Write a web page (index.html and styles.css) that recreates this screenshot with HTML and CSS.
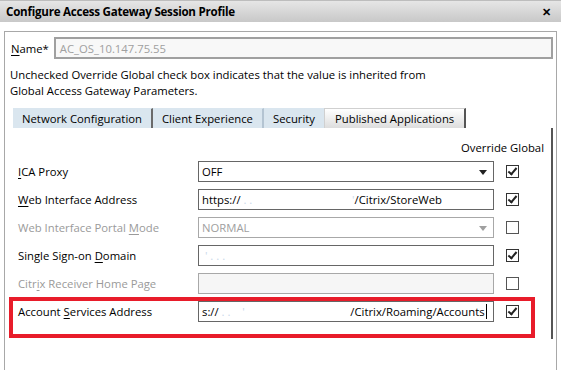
FILE: index.html
```html
<!DOCTYPE html>
<html>
<head>
    <title>Configure Access Gateway Session Profile</title>
    <link rel="stylesheet" href="styles.css">
</head>
<body>
    <div class="titlebar">
        <span class="title">Configure Access Gateway Session Profile</span>
        <span class="close">&#x2715;</span>
    </div>

    <div class="frame">
        <div class="name-row">
            <label><u>N</u>ame*</label>
            <div class="field readonly">AC_OS_10.147.75.55</div>
        </div>

        <p class="hint">Unchecked Override Global check box indicates that the value is inherited from<br>Global Access Gateway Parameters.</p>

        <div class="tabs">
            <div class="tab">Network Configuration</div>
            <div class="tab">Client Experience</div>
            <div class="tab">Security</div>
            <div class="tab active">Published Applications</div>
        </div>

        <div class="panel">
            <div class="override">Override Global</div>

            <div class="rows">
                <div class="row">
                    <label><u>I</u>CA Proxy</label>
                    <div class="field select">OFF<span class="arrow"></span></div>
                    <span class="check on"></span>
                </div>
                <div class="row">
                    <label><u>W</u>eb Interface Address</label>
                    <div class="field">https://<span class="blur">&nbsp;.&nbsp;.&nbsp;&nbsp;&nbsp;&nbsp;&nbsp;&nbsp;&nbsp;&nbsp;&nbsp;&nbsp;&nbsp;&nbsp;&nbsp;&nbsp;&nbsp;&nbsp;&nbsp;&nbsp;&nbsp;&nbsp;&nbsp;&nbsp;&nbsp;&nbsp;&nbsp;&nbsp;&nbsp;&nbsp;&nbsp;&nbsp;&nbsp;&nbsp;&nbsp;&nbsp;'</span>/Citrix/StoreWeb</div>
                    <span class="check on"></span>
                </div>
                <div class="row disabled">
                    <label>Web Interface Portal <u>M</u>ode</label>
                    <div class="field select">NORMAL<span class="arrow"></span></div>
                    <span class="check"></span>
                </div>
                <div class="row">
                    <label>Single Sign-on <u>D</u>omain</label>
                    <div class="field"><span class="blur">&nbsp;'&nbsp;.&nbsp;.&nbsp;.</span></div>
                    <span class="check on"></span>
                </div>
                <div class="row disabled">
                    <label>Citr<u>i</u>x Receiver Home Page</label>
                    <div class="field"></div>
                    <span class="check"></span>
                </div>
                <div class="row marked">
                    <label>Account <u>S</u>ervices Address</label>
                    <div class="field">s://<span class="blur">&nbsp;.&nbsp;.&nbsp;&nbsp;&nbsp;&nbsp;'&nbsp;&nbsp;&nbsp;&nbsp;&nbsp;&nbsp;&nbsp;&nbsp;&nbsp;&nbsp;&nbsp;&nbsp;&nbsp;&nbsp;&nbsp;&nbsp;&nbsp;&nbsp;&nbsp;&nbsp;&nbsp;&nbsp;&nbsp;&nbsp;&nbsp;&nbsp;&nbsp;&nbsp;&nbsp;&nbsp;&nbsp;&nbsp;&nbsp;&nbsp;&nbsp;&nbsp;</span>/Citrix/Roaming/Accounts<span class="caret"></span></div>
                    <span class="check on"></span>
                </div>
            </div>
        </div>
    </div>
</body>
</html>
```

FILE: styles.css
```css
* {
    margin: 0;
    padding: 0;
    box-sizing: border-box;
}

body {
    background: #ffffff;
    color: #000000;
    font-family: 'Open Sans', 'Noto Sans', sans-serif;
    font-size: 11.3px;
    height: 370px;
    overflow: hidden;
}

u {
    text-decoration: underline;
    text-underline-offset: 2px;
}

.titlebar {
    height: 22px;
    display: flex;
    align-items: center;
    justify-content: space-between;
    padding: 0 10px 0 6px;
    background: linear-gradient(#e6e6e6, #c8c8c8);
    border-top: 1px solid #bdbdbd;
}

.title {
    font-weight: 700;
    font-size: 11.6px;
    letter-spacing: -0.25px;
}

.close {
    font-size: 11px;
    font-weight: 700;
}

.frame {
    margin: 9px 4px 0 4px;
    height: 339px;
    border: 1px solid #a8a8a8;
    border-bottom: none;
}

.name-row {
    display: flex;
    align-items: center;
    gap: 5px;
    padding: 5px 3px 0 6px;
}

.name-row .field {
    flex: 1;
    height: 22px;
}

.field {
    height: 21px;
    border: 1px solid #666666;
    background: #ffffff;
    display: flex;
    align-items: center;
    padding: 0 3px;
    white-space: nowrap;
    overflow: hidden;
    position: relative;
}

.field.readonly {
    background: #f8f8f8;
    border: 2px solid #a0a0a0;
    color: #a0a0a0;
    padding: 0 4px;
}

.blur {
    color: #c9d7ea;
}

.hint {
    padding: 8px 0 0 5px;
    line-height: 16px;
}

.tabs {
    display: flex;
    margin: 9px 0 0 8px;
    height: 20px;
}

.tab {
    background: #dae6ef;
    padding: 0 9px;
    display: flex;
    align-items: center;
    border-right: 2px solid #6a6a6a;
    border-top: 1px solid #dae6ef;
}

.tab:nth-child(2) {
    border-right: 2px solid #b4c4d2;
}

.tab:nth-child(3) {
    border-right: none;
}

.tab.active {
    background: linear-gradient(#ffffff, #dddddd);
    border-top: 1px solid #d0d0d0;
    border-left: 1px solid #d0d0d0;
    border-right: 2px solid #555555;
    padding: 0 10px;
}

.panel {
    margin-right: 3px;
    height: 211px;
    border-right: 2px solid #555555;
    padding-top: 11px;
}

.override {
    text-align: right;
    padding-right: 7px;
    line-height: 18px;
}

.rows {
    display: flex;
    flex-direction: column;
    gap: 7px;
    padding: 4px 0 0 13px;
}

.row {
    display: grid;
    grid-template-columns: 168px 296px 13px;
    column-gap: 12px;
    align-items: center;
    height: 21px;
    position: relative;
}

.row.disabled label {
    color: #9a9a9a;
}

.row.disabled .field {
    border-color: #a8a8a8;
    color: #a0a0a0;
}

.row.disabled .field:not(.select) {
    background: #f6f6f6;
}

.select .arrow {
    position: absolute;
    right: 6px;
    top: 8px;
    border-left: 4px solid transparent;
    border-right: 4px solid transparent;
    border-top: 5px solid #222222;
}

.row.disabled .select .arrow {
    border-top-color: #a0a0a0;
}

.check {
    width: 13px;
    height: 13px;
    border: 1px solid #333333;
    background: #ffffff;
    position: relative;
}

.row.disabled .check {
    border-color: #555555;
}

.check.on::after {
    content: "";
    position: absolute;
    left: 3px;
    top: 0px;
    width: 3px;
    height: 7px;
    border-right: 2px solid #222222;
    border-bottom: 2px solid #222222;
    transform: rotate(40deg);
}

.caret {
    display: inline-block;
    width: 1px;
    height: 15px;
    background: #000000;
    margin-left: 1px;
}

.row.marked::after {
    content: "";
    position: absolute;
    left: -9px;
    top: -4px;
    width: 518px;
    height: 33px;
    border: 4px solid #e81c2a;
    pointer-events: none;
}
```
